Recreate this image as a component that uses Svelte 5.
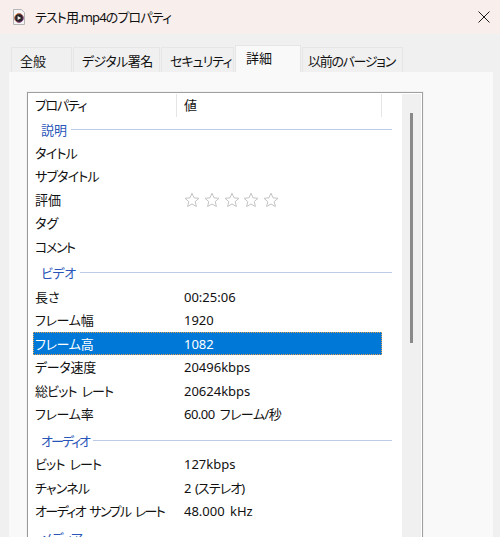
<script>
  const tabs = [
    { name: "全般", w: 61, pad: 8, ls: 0 },
    { name: "デジタル署名", w: 87, pad: 8, ls: -0.6 },
    { name: "セキュリティ", w: 73, pad: 8, ls: -0.95 },
    { name: "詳細", w: 66, pad: 10, ls: 0, active: true },
    { name: "以前のバージョン", w: 101, pad: 5, ls: -1.3 }
  ];

  const groups = [
    {
      name: "説明",
      ls: 0,
      rows: [
        { k: "タイトル", ls: -0.7 },
        { k: "サブタイトル", ls: -0.8 },
        { k: "評価", ls: 0, stars: true },
        { k: "タグ", ls: 0 },
        { k: "コメント", ls: -1.4 }
      ]
    },
    {
      name: "ビデオ",
      ls: -0.5,
      rows: [
        { k: "長さ", ls: 0, v: "00:25:06" },
        { k: "フレーム幅", ls: -0.3, v: "1920" },
        { k: "フレーム高", ls: -0.3, v: "1082", selected: true },
        { k: "データ速度", ls: -0.3, v: "20496kbps" },
        { k: "総ビット レート", ls: -0.9, v: "20624kbps" },
        { k: "フレーム率", ls: -0.3, v: "60.00 フレーム/秒", vls: -0.5 }
      ]
    },
    {
      name: "オーディオ",
      ls: -2,
      rows: [
        { k: "ビット レート", ls: -0.9, v: "127kbps" },
        { k: "チャンネル", ls: -0.8, v: "2 (ステレオ)", vls: -0.9 },
        { k: "オーディオ サンプル レート", ls: -1.6, v: "48.000 kHz" }
      ]
    },
    { name: "メディア", ls: -1, rows: [] }
  ];
</script>

<div class="window">
  <div class="titlebar">
    <svg class="file-icon" width="14" height="18" viewBox="0 0 14 18">
      <defs>
        <linearGradient id="ring" x1="0" y1="0" x2="1" y2="1">
          <stop offset="0" stop-color="#e58a2c" />
          <stop offset="1" stop-color="#7a3fa8" />
        </linearGradient>
      </defs>
      <path d="M1.5 1.5h8l3 3v12h-11z" fill="#f4f4f4" stroke="#b5b5b5" />
      <circle cx="7" cy="10" r="4.4" fill="#2b2428" stroke="url(#ring)" />
      <path d="M5.6 8l3.6 2-3.6 2z" fill="#f2f2f2" />
    </svg>
    <span class="title">テスト用.mp4のプロパティ</span>
    <svg class="close" width="12" height="12" viewBox="0 0 12 12">
      <path d="M0.5 0.5l11 11M11.5 0.5l-11 11" stroke="#1c1c1c" stroke-width="1" fill="none" />
    </svg>
  </div>

  <div class="body">
    <div class="tabs">
      {#each tabs as tab}
        <div
          class="tab"
          class:active={tab.active}
          style="width: {tab.w}px; padding-left: {tab.pad}px; letter-spacing: {tab.ls}px"
        >
          {tab.name}
        </div>
      {/each}
    </div>

    <div class="panel">
      <div class="listbox">
        <div class="list">
          <div class="header">
            <div class="hcell first">プロパティ</div>
            <div class="hcell second">値</div>
          </div>
          {#each groups as group}
            <div class="group">
              <span style="letter-spacing: {group.ls}px">{group.name}</span>
              <div class="rule"></div>
            </div>
            {#each group.rows as row}
              <div class="row" class:selected={row.selected}>
                <div class="key" style="letter-spacing: {row.ls}px">{row.k}</div>
                <div class="val" style="letter-spacing: {row.vls || 0}px">
                  {#if row.stars}
                    <div class="stars">
                      {#each [0, 1, 2, 3, 4] as s}
                        <svg width="16" height="16" viewBox="0 0 16 16">
                          <path
                            d="M8 1.2l2 4.6 5 .5-3.8 3.3 1.2 4.9L8 12l-4.4 2.5 1.2-4.9L1 6.3l5-.5z"
                            fill="none"
                            stroke="#c4c4c4"
                          />
                        </svg>
                      {/each}
                    </div>
                  {:else if row.v}
                    {row.v}
                  {/if}
                </div>
              </div>
            {/each}
          {/each}
        </div>
        <div class="scrollbar">
          <div class="thumb"></div>
        </div>
      </div>
    </div>
  </div>
</div>

<style>
  :global(body) {
    margin: 0;
    background: #f0f0f0;
  }

  .window {
    width: 500px;
    height: 537px;
    overflow: hidden;
    font-family: "Noto Sans", "Noto Sans CJK JP", sans-serif;
    font-feature-settings: "palt";
    font-size: 13px;
    color: #111;
  }

  .titlebar {
    height: 34px;
    background: #f8efed;
    display: flex;
    align-items: center;
    padding: 0 10px 0 12px;
  }

  .file-icon {
    flex: none;
  }

  .title {
    margin-left: 9px;
    flex: 1;
    position: relative;
    top: -1px;
    letter-spacing: -0.85px;
  }

  .body {
    background: #f0f0f0;
    padding: 11px 7px 0 9px;
  }

  .tabs {
    display: flex;
    align-items: flex-end;
    height: 27px;
    padding-left: 2px;
    gap: 1px;
  }

  .tab {
    height: 25px;
    box-sizing: border-box;
    background: #f0f0f0;
    border: 1px solid #e6e6e6;
    border-bottom: none;
    line-height: 27px;
    white-space: nowrap;
  }

  .tab.active {
    height: 27px;
    background: #f9f9f9;
    line-height: 25px;
  }

  .panel {
    background: #f9f9f9;
    padding: 20px 70px 0 18px;
    height: 500px;
  }

  .listbox {
    display: flex;
    width: 396px;
    height: 480px;
    box-sizing: border-box;
    background: #fff;
    border: 1px solid #a0a0a0;
    border-left-color: #9a9a9a;
    padding: 1px;
    outline: 1px solid #f2f2f2;
  }

  .list {
    width: 373px;
    flex: none;
    padding-left: 4px;
    box-sizing: border-box;
  }

  .header {
    display: flex;
    height: 23px;
    line-height: 23px;
    letter-spacing: -1.4px;
  }

  .hcell {
    padding-left: 2px;
    box-sizing: border-box;
    border-right: 1px solid #e5e5e5;
  }

  .hcell.first {
    width: 144px;
  }

  .hcell.second {
    width: 205px;
    padding-left: 7px;
  }

  .group {
    display: flex;
    align-items: center;
    height: 27px;
    box-sizing: border-box;
    padding: 3px 0 0 8px;
    color: #2a55b8;
    gap: 4px;
  }

  .header + .group {
    height: 24px;
    padding-top: 0;
  }

  .rule {
    flex: 1;
    height: 1px;
    background: #bccbe6;
    margin-right: 10px;
  }

  .row {
    display: flex;
    height: 23.4px;
    line-height: 25px;
    width: 349px;
    box-sizing: border-box;
  }

  .key {
    width: 151px;
    padding-left: 2px;
    box-sizing: border-box;
    white-space: nowrap;
    word-spacing: 2.5px;
  }

  .val {
    flex: 1;
    white-space: nowrap;
    word-spacing: 2px;
  }

  .row.selected {
    background: #0078d7;
    color: #fff;
    outline: 1px dotted #e0a050;
    outline-offset: -1px;
  }

  .stars {
    display: flex;
    gap: 3.8px;
    height: 100%;
    align-items: center;
    padding-top: 1px;
    box-sizing: border-box;
  }

  .scrollbar {
    flex: 1;
    background: #f0f0f0;
    display: flex;
    justify-content: center;
    padding-top: 19px;
  }

  .thumb {
    width: 3px;
    height: 230px;
    background: #8a8a8a;
  }
</style>
